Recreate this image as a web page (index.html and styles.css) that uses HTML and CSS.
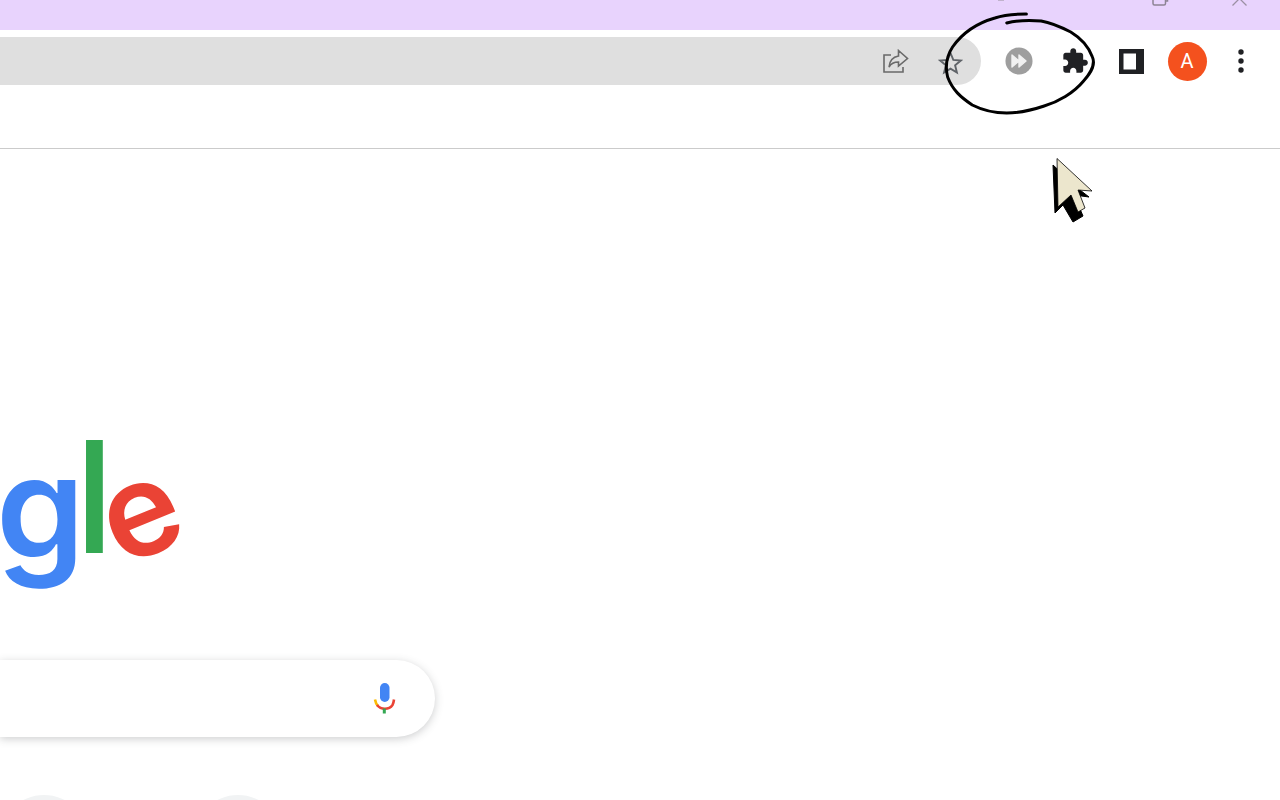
FILE: index.html
```html
<!DOCTYPE html>
<html lang="en">
<head>
<meta charset="utf-8">
<title>New Tab</title>
<link rel="stylesheet" href="styles.css">
</head>
<body>
<div class="window">
  <header class="titlebar">
    <span class="tab-mark"></span>
    <svg class="win-restore" width="18" height="6" viewBox="0 0 18 6"><path d="M2 -4V3.500a1.500 1.500 0 0 0 1.500 1.500H13a1.500 1.500 0 0 0 1.500-1.500V-4M14.500 1H16.500V-4" fill="none" stroke="#8d8494" stroke-width="1.500"/></svg>
    <svg class="win-close" width="18" height="6" viewBox="0 0 18 6"><path d="M1.500 5.500L8-1M15.500 5.500L9-1" fill="none" stroke="#9b90a3" stroke-width="1.300"/></svg>
  </header>
  <div class="toolbar">
    <div class="address">
      <svg width="26" height="24" viewBox="0 0 26 24"><path d="M15.500 1.500L24.500 9.500L15.500 17V13C11 13 8 14.500 6 18C6.500 12 10 8 15.500 7Z M8 6H1V23H20V18" fill="none" stroke="#6a6a6a" stroke-width="1.600"/></svg>
      <svg class="star" width="25" height="24" viewBox="0 0 25 24"><path d="M12.500 2L15.300 8.900L22.800 9.500L17.100 14.300L18.900 21.600L12.500 17.700L6.100 21.600L7.900 14.300L2.200 9.500L9.700 8.900Z" fill="none" stroke="#5f6368" stroke-width="1.900"/></svg>
    </div>
    <div class="actions">
      <span class="action">
        <svg width="28" height="28" viewBox="0 0 30 30"><circle cx="15" cy="15" r="14.500" fill="#9e9e9e"/><path d="M7.500 8.500L15 15L7.500 21.500ZM15 8.500L22.500 15L15 21.500Z" fill="#f1f1f1" stroke="#f1f1f1" stroke-width="1.500" stroke-linejoin="round"/></svg>
      </span>
      <span class="action">
        <svg width="28" height="28" viewBox="0 0 24 24"><path fill="#202124" d="M20.500 11H19V7c0-1.100-.9-2-2-2h-4V3.500C13 2.120 11.880 1 10.500 1S8 2.120 8 3.500V5H4c-1.100 0-1.990.9-1.990 2v3.800H3.500c1.490 0 2.700 1.210 2.700 2.700s-1.210 2.700-2.700 2.700H2V20c0 1.100.9 2 2 2h3.800v-1.500c0-1.490 1.210-2.700 2.700-2.700 1.490 0 2.700 1.210 2.700 2.700V22H17c1.100 0 2-.9 2-2v-4h1.500c1.380 0 2.500-1.120 2.500-2.500S21.880 11 20.500 11z"/></svg>
      </span>
      <span class="action">
        <svg width="25" height="25" viewBox="0 0 25 25"><path fill-rule="evenodd" fill="#202124" d="M0 0H25V25H0ZM4.500 4.500V20.500H17V4.500Z"/></svg>
      </span>
      <span class="action"><span class="avatar">A</span></span>
      <span class="action action-last">
        <svg class="kebab" width="8" height="26" viewBox="0 0 8 26"><circle cx="4" cy="4" r="2.700" fill="#202124"/><circle cx="4" cy="13" r="2.700" fill="#202124"/><circle cx="4" cy="22" r="2.700" fill="#202124"/></svg>
      </span>
    </div>
  </div>
  <main class="page">
    <div class="logo"><span class="g">g</span><span class="l">l</span><span class="e">e</span></div>
    <div class="search">
      <svg class="mic" width="28" height="32" viewBox="0 0 28 32">
        <rect x="10" y="0" width="9.500" height="19" rx="4.750" fill="#4285f4"/>
        <path d="M5 16.500C5.500 19.500 6.500 21.500 8 23" fill="none" stroke="#fbbc04" stroke-width="2.600"/>
        <path d="M7 22C11 27 19 27 22.500 22C23.300 20.800 23.800 18 24 16.500" fill="none" stroke="#ea4335" stroke-width="2.600"/>
        <rect x="12.800" y="25.500" width="3" height="5" fill="#34a853"/>
      </svg>
    </div>
    <div class="shortcuts"><span class="tile"></span><span class="tile"></span></div>
  </main>
</div>
<svg class="scribble" width="180" height="120" viewBox="0 0 180 120">
  <path d="M105 4C92 4 82 5 73 8C55 13 40 23 30 37C24 46 22 55 25 67C30 80 38 87 50 95C62 101 72 103 85 103C97 103 108 101 123 96C137 92 153 83 163 71C172 61 175 54 172 47C168 36 160 28 150 22C140 17 132 13 120 11C108 10 97 10 85 13" fill="none" stroke="#000" stroke-width="3" stroke-linecap="round" transform="scale(0.985 1)"/>
</svg>
<svg class="pointer" width="44" height="70" viewBox="0 0 44 70">
  <path d="M3 7L5 55L13 47L23 64L33 58L24 37L39 39L30 32Z" fill="#000" stroke="#000"/>
  <path d="M7 0.500L42 33L28 32L35 50L28 54L21 37L8 49Z" fill="#ece6cd" stroke="#000" stroke-width="0.800"/>
</svg>
</body>
</html>
```
FILE: styles.css
```css
html, body {
  margin: 0;
  height: 100%;
  overflow: hidden;
  background: #fff;
}
.window {
  display: flex;
  flex-direction: column;
  width: 1280px;
  height: 800px;
  overflow: hidden;
}
.titlebar {
  height: 30px;
  flex: none;
  background: #e8d3fd;
  display: flex;
  align-items: flex-start;
  justify-content: flex-end;
  padding-right: 31px;
  box-sizing: border-box;
}
.tab-mark {
  width: 6px;
  height: 1px;
  margin-right: 147px;
  background: #c0b2cc;
}
.win-restore { margin-right: 62px; }
.toolbar {
  flex: none;
  height: 119px;
  box-sizing: border-box;
  padding: 7px 11px 0 0;
  border-bottom: 1px solid #cbcbcb;
  display: flex;
  align-items: flex-start;
  gap: 10px;
  background: #fff;
}
.address {
  flex: 1;
  height: 48px;
  background: #dfdfdf;
  border-radius: 0 24px 24px 0;
  display: flex;
  align-items: center;
  justify-content: flex-end;
  gap: 29px;
  padding-right: 18px;
}
.star { margin-top: 3px; }
.actions {
  display: flex;
  height: 48px;
  align-items: center;
}
.action {
  width: 56px;
  height: 48px;
  display: flex;
  align-items: center;
  justify-content: center;
}
.action-last { width: 54px; }
.kebab { margin-right: 2px; }
.avatar {
  width: 39px;
  height: 39px;
  border-radius: 50%;
  background: #f4511e;
  color: #fff;
  font: 20px/39px "Roboto", sans-serif;
  text-align: center;
}
.page {
  flex: 1;
  min-height: 0;
  display: flex;
  flex-direction: column;
  align-items: flex-start;
}
.logo {
  flex: none;
  display: flex;
  align-items: baseline;
  height: 190px;
  margin-top: 253px;
  font-family: "Inter", sans-serif;
  font-weight: 500;
  line-height: 190px;
}
.g {
  color: #4285f4;
  font-size: 142px;
  font-weight: 600;
  letter-spacing: -14px;
  display: inline-block;
  transform: translate(-4px, 5px);
}
.l {
  color: #34a853;
  font-size: 156px;
  letter-spacing: -24px;
}
.e {
  color: #ea4335;
  font-size: 130px;
  font-weight: 600;
  display: inline-block;
  margin-left: 10px;
  transform: translateY(3px) rotate(-22deg);
}
.search {
  flex: none;
  width: 435px;
  height: 77px;
  margin-top: 68px;
  box-sizing: border-box;
  background: #fff;
  border-radius: 0 39px 39px 0;
  box-shadow: 0 2px 8px rgba(60, 64, 67, 0.25);
  display: flex;
  align-items: center;
  justify-content: flex-end;
  padding-right: 37px;
}
.shortcuts {
  flex: none;
  display: flex;
  gap: 104px;
  margin-top: 58px;
  margin-left: -1px;
}
.tile {
  flex: none;
  width: 90px;
  height: 90px;
  border-radius: 50%;
  background: #f1f3f4;
}
.scribble {
  position: absolute;
  left: 923px;
  top: 10px;
}
.pointer {
  position: absolute;
  left: 1050px;
  top: 158px;
}
```
